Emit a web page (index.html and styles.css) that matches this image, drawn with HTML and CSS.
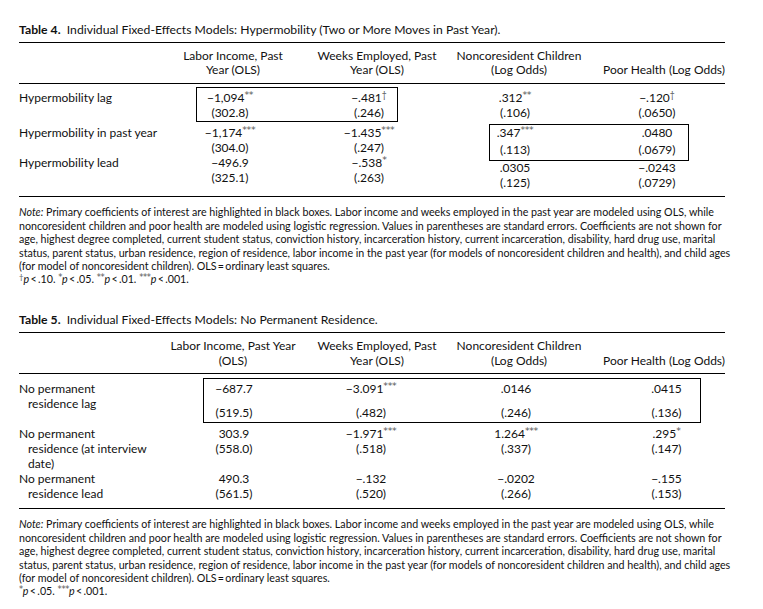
FILE: index.html
```html
<!DOCTYPE html>
<html lang="en">
<head>
<meta charset="utf-8">
<title>Tables 4 and 5</title>
<link rel="stylesheet" href="styles.css">
</head>
<body>
<div class="page">
  <section class="tbl t4">
    <h2 class="cap"><b>Table 4.</b>&nbsp; Individual Fixed-Effects Models: Hypermobility (Two or More Moves in Past Year).</h2>
    <div class="head">
      <div class="h"></div>
      <div class="h">Labor Income, Past<br>Year (OLS)</div>
      <div class="h">Weeks Employed, Past<br>Year (OLS)</div>
      <div class="h">Noncoresident Children<br>(Log Odds)</div>
      <div class="h hr">Poor Health (Log Odds)</div>
    </div>
    <div class="body">
      <div class="grp">
        <div class="lab">Hypermobility lag</div>
        <div class="v c1"><span>−1,094<sup>**</sup></span><span>(302.8)</span></div>
        <div class="v c2"><span>−.481<sup class="dg">†</sup></span><span>(.246)</span></div>
        <div class="v c3"><span>.312<sup>**</sup></span><span>(.106)</span></div>
        <div class="v c4"><span>−.120<sup class="dg">†</sup></span><span>(.0650)</span></div>
        <div class="hl hl-a"></div>
      </div>
      <div class="grp gap">
        <div class="lab">Hypermobility in past year</div>
        <div class="v c1"><span>−1,174<sup>***</sup></span><span>(304.0)</span></div>
        <div class="v c2"><span>−1.435<sup>***</sup></span><span>(.247)</span></div>
        <div class="v c3 boxed"><span>.347<sup>***</sup></span><span>(.113)</span></div>
        <div class="v c4 boxed"><span>.0480</span><span>(.0679)</span></div>
        <div class="hl hl-b"></div>
      </div>
      <div class="grp">
        <div class="lab">Hypermobility lead</div>
        <div class="v c1"><span>−496.9</span><span>(325.1)</span></div>
        <div class="v c2"><span>−.538<sup>*</sup></span><span>(.263)</span></div>
        <div class="v c3 below"><span>.0305</span><span>(.125)</span></div>
        <div class="v c4 below"><span>−.0243</span><span>(.0729)</span></div>
      </div>
    </div>
    <p class="note">
      <span><i>Note:</i> Primary coefficients of interest are highlighted in black boxes. Labor income and weeks employed in the past year are modeled using OLS, while</span>
      <span>noncoresident children and poor health are modeled using logistic regression. Values in parentheses are standard errors. Coefficients are not shown for</span>
      <span>age, highest degree completed, current student status, conviction history, incarceration history, current incarceration, disability, hard drug use, marital</span>
      <span>status, parent status, urban residence, region of residence, labor income in the past year (for models of noncoresident children and health), and child ages</span>
      <span>(for model of noncoresident children). OLS&thinsp;=&thinsp;ordinary least squares.</span>
      <span><sup class="dg">†</sup><i>p</i>&thinsp;&lt;&thinsp;.10. <sup>*</sup><i>p</i>&thinsp;&lt;&thinsp;.05. <sup>**</sup><i>p</i>&thinsp;&lt;&thinsp;.01. <sup>***</sup><i>p</i>&thinsp;&lt;&thinsp;.001.</span>
    </p>
  </section>

  <section class="tbl t5">
    <h2 class="cap"><b>Table 5.</b>&nbsp; Individual Fixed-Effects Models: No Permanent Residence.</h2>
    <div class="head">
      <div class="h"></div>
      <div class="h">Labor Income, Past Year<br>(OLS)</div>
      <div class="h">Weeks Employed, Past<br>Year (OLS)</div>
      <div class="h">Noncoresident Children<br>(Log Odds)</div>
      <div class="h hr">Poor Health (Log Odds)</div>
    </div>
    <div class="body">
      <div class="grp">
        <div class="lab"><span>No permanent</span><span>residence lag</span></div>
        <div class="v c1 wide"><span>−687.7</span><span>(519.5)</span></div>
        <div class="v c2 wide"><span>−3.091<sup>***</sup></span><span>(.482)</span></div>
        <div class="v c3 wide"><span>.0146</span><span>(.246)</span></div>
        <div class="v c4 wide"><span>.0415</span><span>(.136)</span></div>
        <div class="hl hl-c"></div>
      </div>
      <div class="grp gap2">
        <div class="lab"><span>No permanent</span><span>residence (at interview</span><span>date)</span></div>
        <div class="v c1"><span>303.9</span><span>(558.0)</span></div>
        <div class="v c2"><span>−1.971<sup>***</sup></span><span>(.518)</span></div>
        <div class="v c3"><span>1.264<sup>***</sup></span><span>(.337)</span></div>
        <div class="v c4"><span>.295<sup>*</sup></span><span>(.147)</span></div>
      </div>
      <div class="grp">
        <div class="lab"><span>No permanent</span><span>residence lead</span></div>
        <div class="v c1"><span>490.3</span><span>(561.5)</span></div>
        <div class="v c2"><span>−.132</span><span>(.520)</span></div>
        <div class="v c3"><span>−.0202</span><span>(.266)</span></div>
        <div class="v c4"><span>−.155</span><span>(.153)</span></div>
      </div>
    </div>
    <p class="note">
      <span><i>Note:</i> Primary coefficients of interest are highlighted in black boxes. Labor income and weeks employed in the past year are modeled using OLS, while</span>
      <span>noncoresident children and poor health are modeled using logistic regression. Values in parentheses are standard errors. Coefficients are not shown for</span>
      <span>age, highest degree completed, current student status, conviction history, incarceration history, current incarceration, disability, hard drug use, marital</span>
      <span>status, parent status, urban residence, region of residence, labor income in the past year (for models of noncoresident children and health), and child ages</span>
      <span>(for model of noncoresident children). OLS&thinsp;=&thinsp;ordinary least squares.</span>
      <span><sup>*</sup><i>p</i>&thinsp;&lt;&thinsp;.05. <sup>***</sup><i>p</i>&thinsp;&lt;&thinsp;.001.</span>
    </p>
  </section>
</div>
</body>
</html>
```

FILE: styles.css
```css
html, body {
  margin: 0;
  padding: 0;
  background: #fff;
}

body {
  font-family: "Lato", "Open Sans", sans-serif;
  color: #111;
}

.page {
  width: 706px;
  padding: 22px 0 0 19px;
}

.cap {
  margin: 0 0 4px;
  font-size: 12.2px;
  font-weight: normal;
  line-height: 16px;
  white-space: nowrap;
}

.cap b {
  font-weight: bold;
}

.t5 .cap {
  margin-top: 26.3px;
}

.head,
.grp {
  display: grid;
  grid-template-columns: 147px 134px 154px 130px 141px;
}

.head {
  border-top: 1px solid #000;
  border-bottom: 1px solid #000;
  font-size: 12px;
  line-height: 14.5px;
  align-items: end;
  padding: 5.75px 0 5.25px;
}

.t5 .head {
  padding: 6px 0 5px;
}

.h {
  text-align: center;
  white-space: nowrap;
}

.h.hr {
  text-align: right;
}

.body {
  border-bottom: 1px solid #000;
  font-size: 12px;
  line-height: 15px;
}

.t4 .body {
  padding: 6px 0 11px;
}

.t5 .body {
  padding: 7px 0 7.5px;
}

.grp {
  position: relative;
  align-items: start;
}

.grp.gap {
  margin-top: 5px;
}

.grp.gap2 {
  margin-top: 5.5px;
}

.lab {
  white-space: nowrap;
}

.lab span {
  display: block;
}

.lab span + span {
  padding-left: 9px;
}

.v {
  display: flex;
  flex-direction: column;
  align-items: center;
  white-space: nowrap;
}

.v.wide span + span {
  margin-top: 9px;
}

.v.boxed {
  margin-bottom: -2px;
}

.v.boxed span + span {
  margin-top: 2px;
}

.v.below {
  padding-top: 5px;
  margin-bottom: -5px;
}

sup {
  font-family: "DejaVu Sans", sans-serif;
  font-size: 0.78em;
  line-height: 0;
  vertical-align: 0.42em;
  letter-spacing: -0.04em;
  color: #555;
}

sup.dg {
  font-family: "Lato", sans-serif;
  font-size: 0.72em;
  vertical-align: 0.45em;
  letter-spacing: 0;
}

.t4 .c1 { padding-right: 6px; }
.t4 .c2 { padding-right: 16px; }
.t4 .c3 { padding-right: 8px; }
.t4 .c4 { padding-left: 5px; }

.t5 .c1 { padding-left: 2px; }
.t5 .c2 { padding-right: 12px; }
.t5 .c3 { padding-right: 6px; }
.t5 .c4 { padding-left: 24px; }

/* highlight frames drawn over the coefficient cells */
.hl {
  position: absolute;
  box-sizing: border-box;
  border: 1px solid #000;
  pointer-events: none;
}

.hl-a {
  left: 177px;
  top: -3px;
  width: 202px;
  height: 35px;
}

.hl-b {
  left: 470px;
  top: -1px;
  width: 200px;
  height: 37px;
}

.hl-c {
  left: 184px;
  top: -3px;
  width: 498px;
  height: 45px;
}

.note {
  margin: 8.3px 0 0;
  font-size: 10.7px;
  line-height: 13.4px;
  white-space: nowrap;
}

.note span {
  display: block;
}
```
